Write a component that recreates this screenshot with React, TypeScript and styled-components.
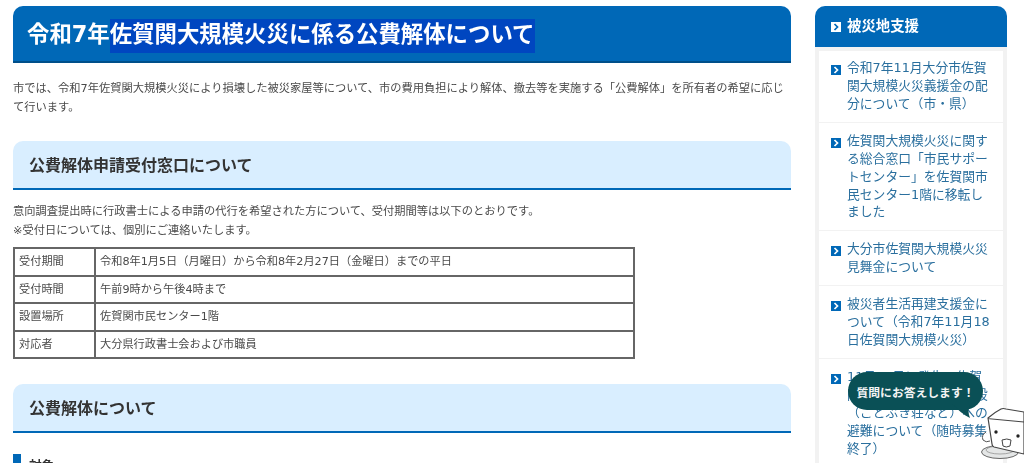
import React from "react";
import styled, { createGlobalStyle } from "styled-components";

const Global = createGlobalStyle`
  html, body { margin: 0; padding: 0; height: 463px; overflow: hidden; background: #fff; }
  body { font-family: "DejaVu Sans", "Noto Sans CJK JP", sans-serif; color: #444; }
  * { box-sizing: border-box; }
`;

const Page = styled.div`
  display: flex;
  align-items: flex-start;
  gap: 24px;
  padding: 6px 17px 0 13px;
  width: 1024px;
  height: 463px;
  overflow: hidden;
  filter: blur(0.35px);
`;
const Main = styled.main`
  width: 778px;
  flex: none;
`;
const Title = styled.h1`
  margin: 0;
  height: 57px;
  padding: 12px 14px 0;
  background: #0068b7;
  border-bottom: 2px solid #004f8a;
  border-radius: 10px 10px 0 0;
  color: #fff;
  font-size: 22.4px;
  line-height: 32px;
  font-weight: 700;
`;
const Selected = styled.span`
  background: #0046c0;
  padding: 2px 0 6px;
`;
const Paragraph = styled.p<{ $top: number }>`
  margin: ${(p) => p.$top}px 0 0;
  padding-right: 4px;
  font-size: 11.25px;
  line-height: 19px;
  color: #4a4a4a;
`;
const SectionHead = styled.h2<{ $top: number }>`
  margin: ${(p) => p.$top}px 0 0;
  height: 49px;
  padding: 0 16px 2px;
  display: flex;
  align-items: center;
  background: #d9eeff;
  border-bottom: 2px solid #0068b7;
  border-radius: 10px 10px 0 0;
  font-size: 16px;
  font-weight: 700;
  color: #333;
`;
const Table = styled.table`
  margin-top: 7px;
  width: 622px;
  border-collapse: collapse;
  font-size: 11.2px;
  color: #4a4a4a;
  td {
    border: 2px solid #666;
    height: 27.6px;
    padding: 0 4px 3px;
  }
  td:first-child { width: 81px; }
`;
const SubHead = styled.h3`
  margin: 21px 0 0;
  padding-left: 8px;
  height: 24px;
  border-left: 8px solid #0068b7;
  font-size: 12.8px;
  font-weight: 700;
  line-height: 24px;
  color: #333;
`;
const Side = styled.aside`
  width: 192px;
  flex: none;
`;
const SideHead = styled.div`
  height: 41px;
  padding: 0 16px 5px;
  display: flex;
  align-items: center;
  gap: 6px;
  background: #0068b7;
  border-radius: 10px 10px 0 0;
  color: #fff;
  font-size: 14.4px;
  font-weight: 700;
`;
const SideList = styled.ul`
  margin: 0;
  padding: 0;
  list-style: none;
  border: 4px solid #f2f2f2;
  border-bottom: 0;
  min-height: 420px;
`;
const SideItem = styled.li`
  display: flex;
  gap: 6px;
  padding: 9px 12px;
  border-bottom: 1px solid #f2f2f2;
  font-size: 12.8px;
  line-height: 17.92px;
  color: #2a6f9e;
  &:first-child { padding-top: 8px; }
`;
const Arrow = styled.svg`
  flex: none;
  width: 10px;
  height: 10px;
  margin-top: 6px;
`;
const Floating = styled.div`
  position: fixed;
  left: 848px;
  top: 372px;
  width: 176px;
  height: 91px;
`;
const Bubble = styled.div`
  position: absolute;
  left: 0;
  top: 0;
  width: 135px;
  height: 38px;
  border-radius: 19px;
  background: #0a5056;
  color: #f4f4f4;
  font-size: 11.8px;
  font-weight: 700;
  display: flex;
  align-items: center;
  justify-content: center;
  white-space: nowrap;
`;
const Tail = styled.svg`
  position: absolute;
  left: 104px;
  top: 32px;
  width: 24px;
  height: 16px;
`;
const Character = styled.svg`
  position: absolute;
  left: 132px;
  top: 35px;
  width: 44px;
  height: 56px;
`;

const Icon = ({ light }: { light?: boolean }) => (
  <Arrow viewBox="0 0 10 10">
    <rect width="10" height="10" fill={light ? "#fff" : "#0068b7"} />
    <path d="M3.5 2 6.5 5 3.5 8" fill="none" stroke={light ? "#0068b7" : "#fff"} strokeWidth="1.7" />
  </Arrow>
);

const items = [
  "令和7年11月大分市佐賀関大規模火災義援金の配分について（市・県）",
  "佐賀関大規模火災に関する総合窓口「市民サポートセンター」を佐賀関市民センター1階に移転しました",
  "大分市佐賀関大規模火災見舞金について",
  "被災者生活再建支援金について（令和7年11月18日佐賀関大規模火災）",
  "11月18日に発生の佐賀関大規模火災に伴う施設（ことぶき荘など）への避難について（随時募集終了）",
];

const rows = [
  ["受付期間", "令和8年1月5日（月曜日）から令和8年2月27日（金曜日）までの平日"],
  ["受付時間", "午前9時から午後4時まで"],
  ["設置場所", "佐賀関市民センター1階"],
  ["対応者", "大分県行政書士会および市職員"],
];

export default function App() {
  return (
    <>
      <Global />
      <Page>
        <Main>
          <Title>
            令和7年<Selected>佐賀関大規模火災に係る公費解体について</Selected>
          </Title>
          <Paragraph $top={16}>
            市では、令和7年佐賀関大規模火災により損壊した被災家屋等について、市の費用負担により解体、撤去等を実施する「公費解体」を所有者の希望に応じて行います。
          </Paragraph>
          <SectionHead $top={24}>公費解体申請受付窓口について</SectionHead>
          <Paragraph $top={12}>
            意向調査提出時に行政書士による申請の代行を希望された方について、受付期間等は以下のとおりです。
            <br />
            ※受付日については、個別にご連絡いたします。
          </Paragraph>
          <Table>
            <tbody>
              {rows.map(([a, b]) => (
                <tr key={a}>
                  <td>{a}</td>
                  <td>{b}</td>
                </tr>
              ))}
            </tbody>
          </Table>
          <SectionHead $top={25}>公費解体について</SectionHead>
          <SubHead>対象</SubHead>
        </Main>
        <Side>
          <SideHead>
            <Icon light />
            被災地支援
          </SideHead>
          <SideList>
            {items.map((t) => (
              <SideItem key={t}>
                <Icon />
                <span>{t}</span>
              </SideItem>
            ))}
          </SideList>
        </Side>
      </Page>
      <Floating>
        <Bubble>質問にお答えします！</Bubble>
        <Tail viewBox="0 0 24 16">
          <path d="M0 0 C6 6 12 11 18 14 C16 9 16 5 18 0Z" fill="#0a5056" />
        </Tail>
        <Character viewBox="0 0 44 56">
          <ellipse cx="20" cy="45" rx="18.5" ry="6.5" fill="#e4e6e6" stroke="#666" strokeWidth="1" />
          <ellipse cx="20" cy="43" rx="14" ry="4" fill="none" stroke="#888" strokeWidth="0.7" />
          <path d="M6 25 Q1 28 3 33 Q6 36 10 34" fill="#fff" stroke="#555" strokeWidth="1" />
          <path d="M8 11 Q15 5 21 2 Q23 1 26 2 L44 5 L44 47 L14 40 Q12 39 12 37 Z" fill="#fff" stroke="#444" strokeWidth="1.2" strokeLinejoin="round" />
          <path d="M8 11 Q9 12 12 12 L44 15" fill="none" stroke="#444" strokeWidth="1" />
          <circle cx="16" cy="25" r="1.7" fill="#222" />
          <circle cx="38" cy="29" r="1.7" fill="#222" />
          <path d="M22 33 Q27 31 31 33 L30 39 Q26 41 23 39 Z" fill="#fff" stroke="#444" strokeWidth="1" />
        </Character>
      </Floating>
    </>
  );
}
